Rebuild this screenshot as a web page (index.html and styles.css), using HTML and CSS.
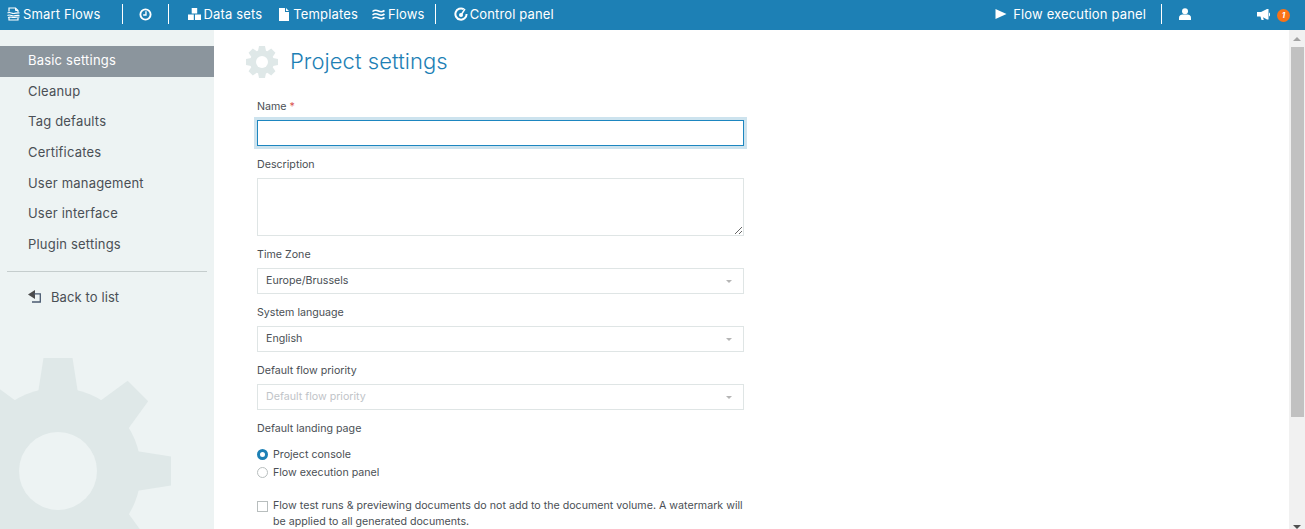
FILE: index.html
```html
<!DOCTYPE html>
<html lang="en">
<head>
<meta charset="utf-8">
<title>Project settings</title>
<link rel="stylesheet" href="styles.css">
</head>
<body>
<header class="topbar">
  <a class="nav-item brand">
    <svg class="ico" width="13" height="14" viewBox="0 0 13 14"><path d="M2 4.500V1h6.500L11 3.500V5M2 10.500V13h9v-2" fill="none" stroke="#fff" stroke-width="1.200"/><path d="M8.500 1v2.500H11" fill="none" stroke="#fff" stroke-width="1"/><path d="M.5 6c2-1.500 4 .5 6 .5s3.500-1 6-.5M.5 8.500c2-1.500 4 .5 6 .5s3.500-1 6-.5M1 10.500c2-1 3.500 0 5.500 0s3.500-.5 6-.5" fill="none" stroke="#fff" stroke-width="1.200"/></svg>
    Smart Flows
  </a>
  <span class="sep sep-a"></span>
  <a class="nav-item history">
    <svg width="13" height="13" viewBox="0 0 14 14"><circle cx="7" cy="7" r="5.500" fill="none" stroke="#fff" stroke-width="2"/><path d="M7.500 3.500v4H4.500" fill="none" stroke="#fff" stroke-width="1.500"/></svg>
  </a>
  <span class="sep sep-b"></span>
  <a class="nav-item data">
    <svg class="ico" width="13" height="12" viewBox="0 0 13 12"><path d="M3.700 0h5.500v5.500H3.700zM0 6.500h5.800V12H0zM7 6.500h6V12H7z" fill="#fff"/></svg>
    Data sets
  </a>
  <a class="nav-item templates">
    <svg class="ico-file" width="10" height="13" viewBox="0 0 10 13"><path d="M0 0h6v4h4v9H0zM7 0l3 3H7z" fill="#fff"/></svg>
    Templates
  </a>
  <a class="nav-item flows">
    <svg class="ico" width="13" height="11" viewBox="0 0 13 11"><path d="M.5 2.500C3 .5 4.500 1 6.500 2s4 1 6-.5M.5 6C3 4 4.500 4.500 6.500 5.500s4 1 6-.5M.5 9.500C3 7.500 4.500 8 6.500 9s4 1 6-.5" fill="none" stroke="#fff" stroke-width="1.600"/></svg>
    Flows
  </a>
  <span class="sep sep-c"></span>
  <a class="nav-item control">
    <svg class="ico-gauge" width="14" height="14" viewBox="0 0 14 14"><path d="M9.800 2.200A5.600 5.600 0 1 0 12.600 7" fill="none" stroke="#fff" stroke-width="2"/><circle cx="7" cy="8" r="2" fill="#fff"/><path d="M7 8l4-6" stroke="#fff" stroke-width="1.400"/></svg>
    Control panel
  </a>
  <span class="spacer"></span>
  <a class="nav-item play">
    <svg class="ico-wide" width="12" height="10" viewBox="0 0 12 10"><path d="M.500 0l11 5-11 5z" fill="#fff"/></svg>
    Flow execution panel
  </a>
  <span class="sep sep-d"></span>
  <a class="nav-item user">
    <svg width="12" height="12" viewBox="0 0 12 12"><circle cx="6" cy="3.200" r="3" fill="#fff"/><path d="M0 12V9.500C0 7.500 2 6.500 3.500 6.500h5C10 6.500 12 7.500 12 9.500V12z" fill="#fff"/></svg>
  </a>
  <a class="nav-item notify">
    <svg width="13" height="11" viewBox="0 0 13 11"><path d="M0 3h4l6-3h1.500v10.500H10L6 8.200l.8 2.800H4.500L3.500 7.500H0z" fill="#fff"/><path d="M12 3.500a2 2 0 0 1 1 2 2 2 0 0 1-1 2z" fill="#fff"/></svg>
    <span class="badge">1</span>
  </a>
</header>

<div class="layout">
  <aside class="sidebar">
    <svg class="side-gear" width="240" height="240" viewBox="-120 -120 240 240">
      <g fill="#dfe8e8">
        <circle r="83"/>
        <path d="M-20 -78L-14.500 -113H14.500L20 -78z"/>
        <path d="M-20 -78L-14.500 -113H14.500L20 -78z" transform="rotate(45)"/>
        <path d="M-20 -78L-14.500 -113H14.500L20 -78z" transform="rotate(90)"/>
        <path d="M-20 -78L-14.500 -113H14.500L20 -78z" transform="rotate(135)"/>
        <path d="M-20 -78L-14.500 -113H14.500L20 -78z" transform="rotate(180)"/>
        <path d="M-20 -78L-14.500 -113H14.500L20 -78z" transform="rotate(225)"/>
        <path d="M-20 -78L-14.500 -113H14.500L20 -78z" transform="rotate(270)"/>
        <path d="M-20 -78L-14.500 -113H14.500L20 -78z" transform="rotate(315)"/>
      </g>
      <circle r="39" fill="#edf3f3"/>
    </svg>
    <nav class="side-menu">
      <a class="side-link active">Basic settings</a>
      <a class="side-link">Cleanup</a>
      <a class="side-link">Tag defaults</a>
      <a class="side-link">Certificates</a>
      <a class="side-link">User management</a>
      <a class="side-link">User interface</a>
      <a class="side-link">Plugin settings</a>
    </nav>
    <hr class="side-rule">
    <a class="back-link">
      <svg width="13" height="13" viewBox="0 0 13 13"><path d="M0 4.500L7 0v9z" fill="#4b4b4b"/><path d="M6 3.800h6.300V12H4" fill="none" stroke="#4a5a70" stroke-width="1.300"/></svg>
      Back to list
    </a>
  </aside>

  <main class="content">
    <div class="page-head">
      <svg width="32" height="32" viewBox="-16 -16 32 32">
        <g fill="#dfe8e8">
          <circle r="12"/>
          <path d="M-4 -11L-3 -16H3L4 -11z"/>
          <path d="M-4 -11L-3 -16H3L4 -11z" transform="rotate(45)"/>
          <path d="M-4 -11L-3 -16H3L4 -11z" transform="rotate(90)"/>
          <path d="M-4 -11L-3 -16H3L4 -11z" transform="rotate(135)"/>
          <path d="M-4 -11L-3 -16H3L4 -11z" transform="rotate(180)"/>
          <path d="M-4 -11L-3 -16H3L4 -11z" transform="rotate(225)"/>
          <path d="M-4 -11L-3 -16H3L4 -11z" transform="rotate(270)"/>
          <path d="M-4 -11L-3 -16H3L4 -11z" transform="rotate(315)"/>
        </g>
        <circle r="6" fill="#fff"/>
      </svg>
      <h1 class="page-title">Project settings</h1>
    </div>

    <form class="form">
      <div class="field">
        <label class="label">Name <span class="req">*</span></label>
        <input class="control-box focused" type="text">
      </div>
      <div class="field">
        <label class="label">Description</label>
        <textarea class="control-box area"></textarea>
      </div>
      <div class="field">
        <label class="label">Time Zone</label>
        <div class="select"><span>Europe/Brussels</span><i class="caret"></i></div>
      </div>
      <div class="field">
        <label class="label">System language</label>
        <div class="select"><span>English</span><i class="caret"></i></div>
      </div>
      <div class="field">
        <label class="label">Default flow priority</label>
        <div class="select placeholder"><span>Default flow priority</span><i class="caret"></i></div>
      </div>
      <div class="field field-radios">
        <label class="label">Default landing page</label>
        <div class="radios">
          <div class="option"><span class="radio on"></span>Project console</div>
          <div class="option"><span class="radio"></span>Flow execution panel</div>
        </div>
      </div>
      <div class="check-row">
        <span class="checkbox"></span>
        <span class="check-text">Flow test runs &amp; previewing documents do not add to the document volume. A watermark will be applied to all generated documents.</span>
      </div>
    </form>
  </main>

  <div class="scrollbar" aria-hidden="true">
    <i class="arrow-up"></i>
    <i class="thumb"></i>
    <i class="arrow-down"></i>
  </div>
</div>
</body>
</html>
```
FILE: styles.css
```css
* { box-sizing: border-box; }
html, body { height: 100%; margin: 0; }
body {
  font-family: Inter, "Liberation Sans", sans-serif;
  color: #4a4f55;
  overflow: hidden;
  display: flex;
  flex-direction: column;
  background: #fff;
}
.topbar {
  flex: none;
  height: 30px;
  background: #1d80b5;
  color: #fff;
  display: flex;
  align-items: center;
  font-size: 13px;
  letter-spacing: .15px;
  padding: 0 0 2px 7px;
}
.nav-item { display: flex; align-items: center; white-space: nowrap; }
.ico { margin-right: 3px; }
.ico-file { margin-right: 4px; }
.ico-gauge { margin-right: 2px; }
.ico-wide { margin-right: 6px; }
.sep { width: 1px; height: 20px; background: #fff; }
.sep-a { margin-left: 21px; }
.history { margin-left: 16px; }
.sep-b { margin-left: 16px; }
.data { margin-left: 19px; }
.templates { margin-left: 17px; }
.flows { margin-left: 14px; }
.sep-c { margin-left: 10px; }
.control { margin-left: 18px; }
.spacer { flex: 1; }
.sep-d { margin-left: 15px; }
.user { margin-left: 17px; }
.notify { margin-left: 66px; margin-right: 15px; gap: 7px; }
.badge {
  width: 13px;
  height: 13px;
  border-radius: 50%;
  background: #f97316;
  color: #fff;
  font-size: 8px;
  font-weight: 700;
  font-style: italic;
  display: flex;
  align-items: center;
  justify-content: center;
  margin-top: 2px;
}

.layout { flex: 1; min-height: 0; display: flex; }
.sidebar {
  flex: none;
  width: 214px;
  background: #edf3f3;
  position: relative;
  overflow: hidden;
  padding-top: 16px;
}
.side-gear { position: absolute; left: -62px; top: 321px; }
.side-menu { position: relative; display: flex; flex-direction: column; }
.side-link {
  height: 30.6px;
  padding: 0 0 2px 28px;
  display: flex;
  align-items: center;
  font-size: 13px;
  letter-spacing: .2px;
  color: #4a4f55;
}
.side-link.active { background: #8b959d; color: #fff; }
.side-rule {
  position: relative;
  height: 1px;
  border: 0;
  background: #c5cdcd;
  margin: 10.6px 7px 0;
}
.back-link {
  position: relative;
  display: flex;
  align-items: center;
  gap: 10px;
  margin: 17px 0 0 28px;
  font-size: 13px;
  letter-spacing: .1px;
  color: #4a4f55;
}

.content {
  flex: 1;
  min-width: 0;
  overflow: hidden;
  padding: 16px 0 0 32px;
}
.scrollbar {
  flex: none;
  width: 16px;
  background: #f1f1f1;
  display: flex;
  flex-direction: column;
  overflow: hidden;
}
.scrollbar i { display: block; flex: none; }
.arrow-up {
  width: 0;
  height: 0;
  margin: 7px 0 6px 4px;
  border-left: 4px solid transparent;
  border-right: 4px solid transparent;
  border-bottom: 4px solid #a3a3a3;
}
.thumb {
  width: 13px;
  height: 370px;
  margin-left: 2px;
  background: #c1c1c1;
}
.arrow-down {
  width: 0;
  height: 0;
  margin: 108px 0 0 4px;
  border-left: 4px solid transparent;
  border-right: 4px solid transparent;
  border-top: 4px solid #505050;
}
.page-head { display: flex; align-items: center; gap: 12px; height: 32px; }
.page-title {
  margin: 0 0 2px;
  font-size: 22px;
  font-weight: 300;
  letter-spacing: .06px;
  color: #1d80b5;
}
.form { width: 498px; padding: 20px 0 0 11px; font-size: 10.67px; }
.field { margin-bottom: 10px; }
.label { display: block; height: 16px; line-height: 18px; margin-bottom: 6px; }
.req { color: #d9534f; }
.control-box {
  display: block;
  width: 100%;
  height: 26px;
  border: 1px solid #dfe5e5;
  background: #fff;
  border-radius: 0;
  outline: none;
  font: inherit;
  margin: 0;
}
.focused { border-color: #1d86c0; box-shadow: 0 0 0 3px #cde3ee; }
.area { height: 58px; }
.select {
  height: 26px;
  border: 1px solid #dfe5e5;
  padding: 0 11px 1px 8px;
  display: flex;
  align-items: center;
  justify-content: space-between;
}
.placeholder { color: #bfc4c8; }
.caret {
  width: 0;
  height: 0;
  border-left: 3px solid transparent;
  border-right: 3px solid transparent;
  border-top: 3px solid #b5b5b5;
  margin-top: 2px;
}
.field-radios { margin-bottom: 18px; }
.radios { margin-top: 10px; display: flex; flex-direction: column; gap: 2px; }
.option { display: flex; align-items: center; height: 16px; gap: 5px; }
.radio {
  width: 11px;
  height: 11px;
  border-radius: 50%;
  border: 1px solid #b8bebe;
  background: #fff;
}
.radio.on { border: 3px solid #1d80b5; background: #fff; }
.check-row { display: flex; gap: 5px; }
.checkbox {
  flex: none;
  width: 11px;
  height: 11px;
  border: 1px solid #b8bebe;
  margin-top: 3px;
}
.check-text { line-height: 16px; }
```
